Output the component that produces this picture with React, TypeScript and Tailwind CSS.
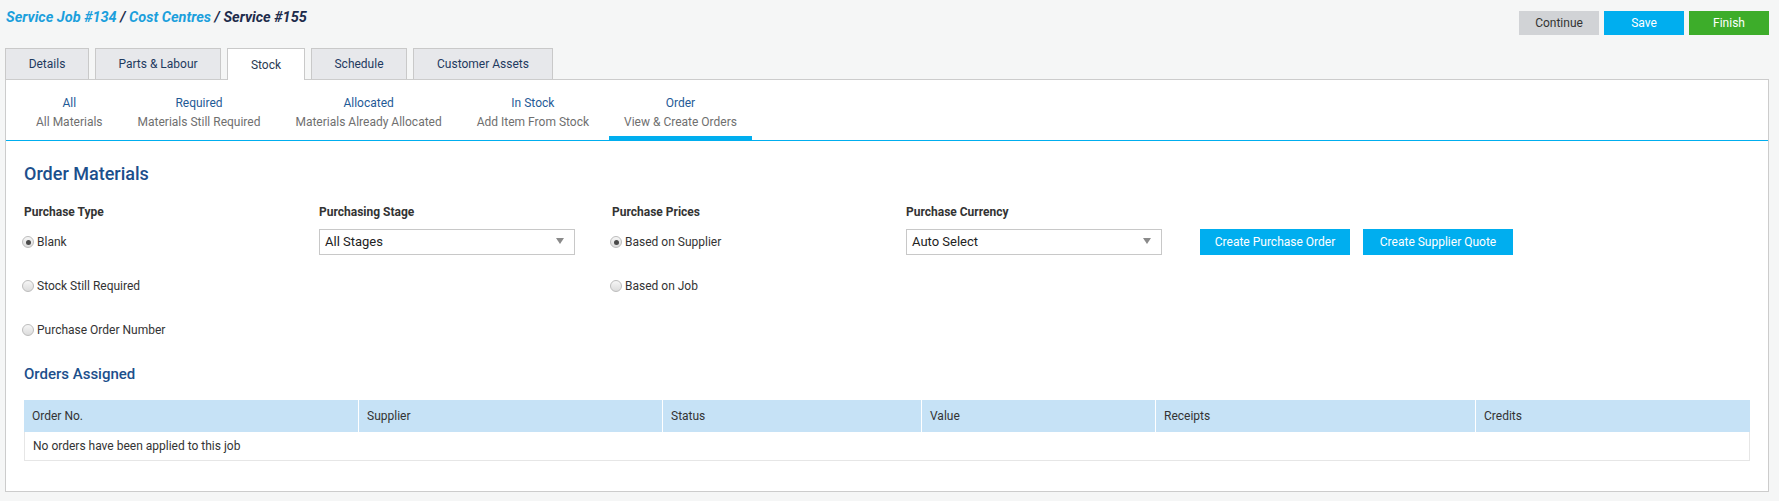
import React from "react";

const tabs = ["Details", "Parts & Labour", "Stock", "Schedule", "Customer Assets"];

const subTabs = [
  { title: "All", sub: "All Materials" },
  { title: "Required", sub: "Materials Still Required" },
  { title: "Allocated", sub: "Materials Already Allocated" },
  { title: "In Stock", sub: "Add Item From Stock" },
  { title: "Order", sub: "View & Create Orders" },
];

const columns = [
  { label: "Order No.", w: "w-[334px]" },
  { label: "Supplier", w: "w-[304px]" },
  { label: "Status", w: "w-[259px]" },
  { label: "Value", w: "w-[234px]" },
  { label: "Receipts", w: "w-[320px]" },
  { label: "Credits", w: "flex-1" },
];

function Radio({ checked, label }: { checked?: boolean; label: string }) {
  return (
    <div className="h-[26px] flex items-center gap-[3px] -ml-[2px]">
      <span className="w-[12px] h-[12px] rounded-full border border-[#bcbcbc] bg-gradient-to-b from-[#f6f6f6] to-[#dcdcdc] flex items-center justify-center">
        {checked && <span className="w-[5px] h-[5px] rounded-full bg-[#4a4a4a]" />}
      </span>
      <span className="text-[12px] text-[#333]">{label}</span>
    </div>
  );
}

function Select({ value }: { value: string }) {
  return (
    <div className="h-[26px] w-[256px] border border-[#c8c8c8] bg-white flex items-center justify-between pl-[5px] pr-[10px]">
      <span className="text-[13px] text-[#222]">{value}</span>
      <svg width="8" height="6" viewBox="0 0 8 6" className="-mt-[3px]">
        <path d="M0 0 L8 0 L4 6 Z" fill="#8a8a8a" />
      </svg>
    </div>
  );
}

function Label({ children }: { children?: React.ReactNode }) {
  return <div className="h-[16px] leading-[16px] mb-[9px] text-[12px] font-bold text-[#333]">{children}</div>;
}

export default function App() {
  return (
    <div className="min-h-[501px] bg-[#f5f6f6] font-['Roboto',sans-serif]">
      {/* header */}
      <div className="h-[48px] flex items-start justify-between pl-[6px] pr-[10px]">
        <div className="pt-[9px] leading-[18px] text-[14.5px] font-bold italic">
          <span className="text-[#1b9fdc]">Service Job #134</span>
          <span className="text-[#1d2c4c]"> / </span>
          <span className="text-[#1b9fdc]">Cost Centres</span>
          <span className="text-[#1d2c4c]"> / Service #155</span>
        </div>
        <div className="mt-[11px] flex gap-[5px]">
          <button className="w-[80px] h-[24px] bg-[#d1d3d6] text-[12px] text-[#333]">Continue</button>
          <button className="w-[80px] h-[24px] bg-[#00aeef] text-[12px] text-white">Save</button>
          <button className="w-[80px] h-[24px] bg-[#3dad2a] text-[12px] text-white">Finish</button>
        </div>
      </div>

      {/* tabs */}
      <div className="ml-[5px] flex gap-[6px] h-[31px]">
        {tabs.map((t) => {
          const active = t === "Stock";
          const w =
            t === "Details" ? "w-[84px]" : t === "Parts & Labour" ? "w-[126px]" : t === "Stock" ? "w-[78px]" : t === "Schedule" ? "w-[96px]" : "w-[140px]";
          return (
            <div
              key={t}
              className={`${w} flex items-center justify-center border border-b-0 border-[#c9c9c9] text-[12px] ${
                active ? "bg-white h-[32px] relative z-10 text-[#2a3a52]" : "bg-[#e7e8eb] h-[31px] text-[#1e3a5f]"
              }`}
            >
              {t}
            </div>
          );
        })}
      </div>

      {/* panel */}
      <div className="ml-[5px] mr-[10px] border border-[#cccccc] bg-white pb-[30px]">
        <div className="h-[61px] flex pl-[15px] gap-[5px] border-b border-[#00aeef]">
          {subTabs.map((s) => {
            const active = s.title === "Order";
            return (
              <div
                key={s.title}
                className={`h-[60px] px-[15px] pt-[14px] flex flex-col items-center text-[12px] leading-[19px] ${
                  active ? "border-b-4 border-[#00aeef]" : ""
                }`}
              >
                <span className="text-[#1f5a96]">{s.title}</span>
                <span className="text-[#6f6f6f]">{s.sub}</span>
              </div>
            );
          })}
        </div>

        <div className="px-[18px]">
          <h2 className="pt-[21px] text-[18px] leading-[24px] font-medium text-[#1c4f8c]">Order Materials</h2>

          <div className="mt-[18px] grid grid-cols-[295px_293px_294px_294px_auto]">
            <div className="flex flex-col">
              <Label>Purchase Type</Label>
              <div className="flex flex-col gap-[18px]">
                <Radio checked label="Blank" />
                <Radio label="Stock Still Required" />
                <Radio label="Purchase Order Number" />
              </div>
            </div>
            <div className="flex flex-col">
              <Label>Purchasing Stage</Label>
              <Select value="All Stages" />
            </div>
            <div className="flex flex-col">
              <Label>Purchase Prices</Label>
              <div className="flex flex-col gap-[18px]">
                <Radio checked label="Based on Supplier" />
                <Radio label="Based on Job" />
              </div>
            </div>
            <div className="flex flex-col">
              <Label>Purchase Currency</Label>
              <Select value="Auto Select" />
            </div>
            <div className="flex flex-col">
              <Label />
              <div className="flex gap-[13px]">
                <button className="w-[150px] h-[26px] bg-[#00aeef] text-white text-[12px]">Create Purchase Order</button>
                <button className="w-[150px] h-[26px] bg-[#00aeef] text-white text-[12px]">Create Supplier Quote</button>
              </div>
            </div>
          </div>

          <h3 className="mt-[21px] text-[15px] leading-[20px] font-medium text-[#1c4f8c]">Orders Assigned</h3>

          <div className="mt-[16px] border border-[#e6e6e6] border-t-0">
            <div className="flex h-[32px] bg-[#c6e2f6] -mx-px">
              {columns.map((c, i) => (
                <div
                  key={c.label}
                  className={`${c.w} flex items-center pl-[8px] text-[12px] text-[#333] ${i > 0 ? "border-l border-white" : ""}`}
                >
                  {c.label}
                </div>
              ))}
            </div>
            <div className="h-[28px] flex items-center pl-[8px] text-[12px] text-[#333]">
              No orders have been applied to this job
            </div>
          </div>
        </div>
      </div>
    </div>
  );
}
